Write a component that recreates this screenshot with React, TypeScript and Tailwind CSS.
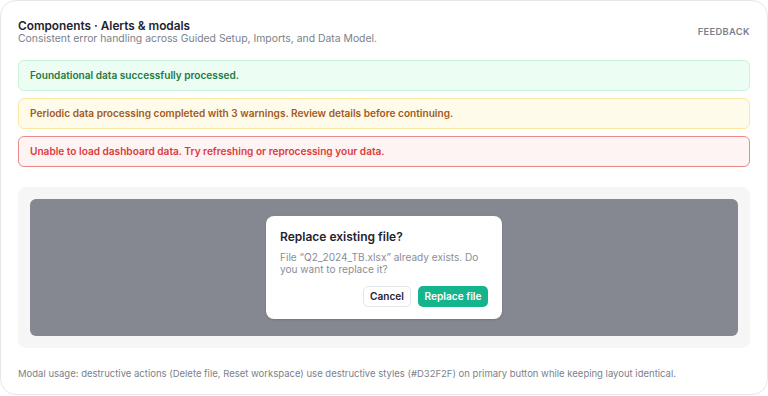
export default function App() {
  const alerts = [
    {
      text: "Foundational data successfully processed.",
      cls: "bg-[#ecfdf3] border-[#c9f3d9] text-[#1f7a45]",
    },
    {
      text: "Periodic data processing completed with 3 warnings. Review details before continuing.",
      cls: "bg-[#fffbea] border-[#fbe6a2] text-[#a35a1c]",
    },
    {
      text: "Unable to load dashboard data. Try refreshing or reprocessing your data.",
      cls: "bg-[#fef4f4] border-[#ec8a8a] text-[#dc3b3b]",
    },
  ];

  return (
    <div
      className="w-[768px] h-[396px] bg-white"
      style={{ fontFamily: "Inter, 'Noto Sans', sans-serif" }}
    >
      <div className="h-[395px] border border-[#e5e7eb] rounded-2xl px-[17px] pt-[19px] flex flex-col">
        <div className="flex items-start justify-between">
          <div>
            <h1 className="text-[11.8px] leading-[13px] font-semibold text-[#1f2430]">
              Components · Alerts &amp; modals
            </h1>
            <p className="text-[10.4px] leading-[12px] text-[#7b7f8a]">
              Consistent error handling across Guided Setup, Imports, and Data Model.
            </p>
          </div>
          <button className="mt-[6px] text-[9.3px] leading-[12px] font-semibold tracking-[0.04em] text-[#7b7f8a]">
            FEEDBACK
          </button>
        </div>

        <div className="mt-[15px] flex flex-col gap-[7px]">
          {alerts.map((a) => (
            <div
              key={a.text}
              className={`h-[31px] border rounded-[6px] px-[11px] flex items-center text-[10.1px] font-semibold ${a.cls}`}
            >
              {a.text}
            </div>
          ))}
        </div>

        <div className="mt-[20px] bg-[#f6f6f7] rounded-[8px] p-[12px]">
          <div className="h-[137px] bg-[#858891] rounded-[6px] flex items-center justify-center">
            <div className="w-[236px] h-[103px] bg-white rounded-[8px] px-[14px] pt-[13px] shadow-sm">
              <h2 className="text-[12px] leading-[16px] font-semibold text-[#1f2430]">
                Replace existing file?
              </h2>
              <p className="mt-[6px] text-[10.1px] leading-[12px] text-[#8a8e98]">
                File “Q2_2024_TB.xlsx” already exists. Do you want to replace it?
              </p>
              <div className="mt-[11px] flex justify-end gap-[7px]">
                <button className="h-[21px] w-[48px] rounded-[5px] border border-[#e3e5e8] bg-white text-[10.1px] font-semibold text-[#1f2430]">
                  Cancel
                </button>
                <button className="h-[21px] w-[70px] rounded-[5px] bg-[#14b48c] text-[10.1px] font-semibold text-white">
                  Replace file
                </button>
              </div>
            </div>
          </div>
        </div>

        <p className="mt-[20px] text-[9.5px] leading-[12px] text-[#7b7f8a]">
          Modal usage: destructive actions (Delete file, Reset workspace) use destructive styles
          (#D32F2F) on primary button while keeping layout identical.
        </p>
      </div>
    </div>
  );
}
